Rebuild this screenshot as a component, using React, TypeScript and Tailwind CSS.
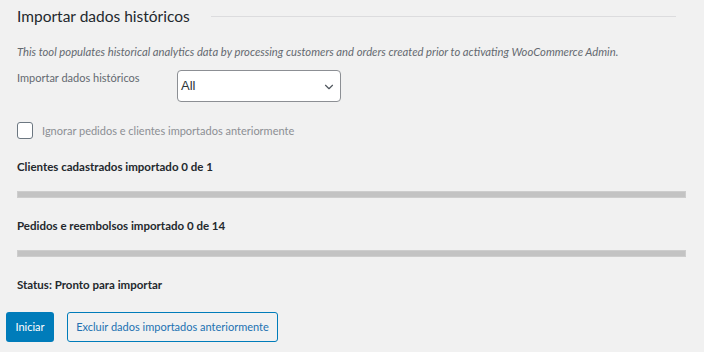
import { ChevronDown } from 'lucide-react';

const font = { fontFamily: 'Lato, "Noto Sans", sans-serif' };

function ProgressRow({ label }: { label: string }) {
  return (
    <div className="flex flex-col">
      <p className="text-[11.5px] font-bold leading-[16px] text-[#23282d]">{label}</p>
      <div className="mt-[16px] h-[7px] w-[669px] bg-[#c3c3c3] border border-[#cdcdcd]" />
    </div>
  );
}

export default function App() {
  return (
    <div
      className="w-[704px] h-[352px] bg-[#f1f1f1] overflow-hidden relative"
      style={font}
    >
      <div className="pl-[17px] pt-[5px]">
        {/* Title with rule */}
        <div className="flex items-center">
          <h2 className="text-[15.5px] leading-[22px] text-[#23282d] whitespace-nowrap">
            Importar dados históricos
          </h2>
          <div className="ml-[21px] h-px w-[465px] bg-[#dcdcde]" />
        </div>

        <p className="mt-[18px] text-[11.25px] italic leading-[14px] text-[#646970] whitespace-nowrap">
          This tool populates historical analytics data by processing customers and orders created prior to activating WooCommerce Admin.
        </p>

        {/* Period select */}
        <div className="mt-[11px] flex">
          <label className="w-[160px] text-[11px] leading-[16px] text-[#646970]">
            Importar dados históricos
          </label>
          <div className="relative w-[164px] h-[32px] rounded-[4px] border border-[#8c8f94] bg-white flex items-center">
            <span
              className="pl-[3px] text-[13px] text-[#2c3338]"
              style={{ fontFamily: '"Liberation Sans", Arial, sans-serif' }}
            >
              All
            </span>
            <ChevronDown
              className="absolute right-[4px] top-[9px] text-[#50575e]"
              size={14}
              strokeWidth={2}
            />
          </div>
        </div>

        {/* Skip checkbox */}
        <div className="mt-[20px] flex items-center">
          <div className="w-[16px] h-[17px] rounded-[3px] border border-[#6c7781] bg-white" />
          <span className="ml-[9px] text-[11px] leading-[16px] text-[#8c8f94]">
            Ignorar pedidos e clientes importados anteriormente
          </span>
        </div>

        <div className="mt-[20px] flex flex-col gap-[20px]">
          <ProgressRow label="Clientes cadastrados importado 0 de 1" />
          <ProgressRow label="Pedidos e reembolsos importado 0 de 14" />
        </div>

        <p className="mt-[20px] text-[11.5px] font-bold leading-[16px] text-[#23282d]">
          Status: Pronto para importar
        </p>
      </div>

      {/* Actions */}
      <div className="mt-[19px] ml-[6px] flex gap-[13px]">
        <button className="h-[30px] w-[48px] rounded-[3px] bg-[#007cba] text-[11px] text-white">
          Iniciar
        </button>
        <button className="h-[30px] w-[211px] rounded-[3px] border border-[#007cba] text-[11px] text-[#2271b1] whitespace-nowrap">
          Excluir dados importados anteriormente
        </button>
      </div>
    </div>
  );
}
